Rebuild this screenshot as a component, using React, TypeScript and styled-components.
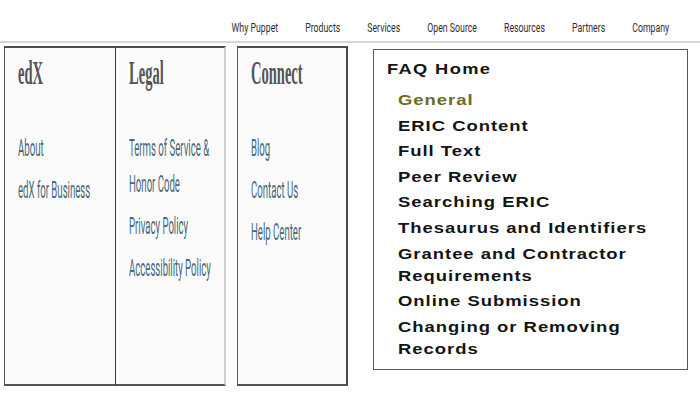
import React from 'react';
import styled, { createGlobalStyle } from 'styled-components';

const GlobalStyle = createGlobalStyle`
  html, body {
    margin: 0;
    padding: 0;
    background: #ffffff;
  }
  body {
    width: 700px;
    height: 400px;
    overflow: hidden;
    font-family: "Liberation Sans", Arial, sans-serif;
  }
`;

const navItems = ['Why Puppet', 'Products', 'Services', 'Open Source', 'Resources', 'Partners', 'Company'];

const footerColumns = [
  { title: 'edX', links: [['About'], ['edX for Business']] },
  { title: 'Legal', links: [['Terms of Service &', 'Honor Code'], ['Privacy Policy'], ['Accessibility Policy']] },
  { title: 'Connect', links: [['Blog'], ['Contact Us'], ['Help Center']] },
];

const faqItems = [
  { label: ['General'], active: true },
  { label: ['ERIC Content'] },
  { label: ['Full Text'] },
  { label: ['Peer Review'] },
  { label: ['Searching ERIC'] },
  { label: ['Thesaurus and Identifiers'] },
  { label: ['Grantee and Contractor', 'Requirements'] },
  { label: ['Online Submission'] },
  { label: ['Changing or Removing', 'Records'] },
];

const Page = styled.div`
  width: 700px;
  height: 400px;
  display: flex;
  flex-direction: column;
`;

const TopNav = styled.nav`
  height: 43px;
  box-sizing: border-box;
  border-bottom: 2px solid #d3d7db;
  display: flex;
  justify-content: flex-end;
  align-items: flex-start;
  padding: 21px 31px 0 0;
`;

// the whole menu is drawn narrow, like a condensed face
const NavGroup = styled.div`
  display: flex;
  gap: 38.6px;
  transform: scaleX(0.7);
  transform-origin: right center;
`;

const NavLink = styled.a`
  font-family: "Roboto", "Liberation Sans", sans-serif;
  font-size: 12.5px;
  line-height: 14px;
  color: #2f2f2f;
  white-space: nowrap;
`;

const Content = styled.div`
  display: flex;
  align-items: flex-start;
  padding-left: 4px;
`;

const Footer = styled.div`
  display: flex;
  margin-top: 3px;
`;

const Column = styled.div<{ $left: string; $right?: string; $gap?: number }>`
  width: 111px;
  height: 340px;
  box-sizing: border-box;
  background: #fbfbfb;
  border-top: 2px solid #4d4d4d;
  border-bottom: 2px solid #555;
  border-left: 1.5px solid ${({ $left }) => $left};
  border-right: ${({ $right }) => ($right ? `2px solid ${$right}` : 'none')};
  margin-left: ${({ $gap }) => $gap ?? 0}px;
  padding: 5px 0 0 13px;
  display: flex;
  flex-direction: column;
  align-items: flex-start;
`;

const ColTitle = styled.h3`
  margin: 0;
  font-family: "Liberation Serif", "DejaVu Serif", serif;
  font-weight: bold;
  font-size: 33px;
  line-height: 40px;
  color: #555;
  white-space: nowrap;
  transform: scaleX(0.44);
  transform-origin: left center;
`;

const LinkList = styled.ul`
  list-style: none;
  margin: 37px 0 0;
  padding: 0;
  display: flex;
  flex-direction: column;
  align-items: flex-start;
  gap: 6px;
`;

const FooterLink = styled.li`
  font-family: "Roboto", "Liberation Sans", sans-serif;
  font-size: 24px;
  line-height: 36px;
  color: #44697d;
  white-space: nowrap;
  transform: scaleX(0.4);
  transform-origin: left center;
`;

const FaqBox = styled.div`
  margin: 6px 0 0 25px;
  width: 315px;
  height: 321px;
  box-sizing: border-box;
  border: 1.5px solid #5a5a5a;
  background: #fff;
  padding: 9px 0 0 13px;
  display: flex;
  flex-direction: column;
  align-items: flex-start;
`;

const FaqTitle = styled.div`
  font-family: "Liberation Sans", Arial, sans-serif;
  font-weight: bold;
  font-size: 15px;
  line-height: 20px;
  letter-spacing: 1.1px;
  color: #151515;
  white-space: nowrap;
  transform: scaleX(1.22);
  transform-origin: left center;
`;

const FaqList = styled.ul`
  list-style: none;
  margin: 10px 0 0;
  padding: 0 0 0 11px;
  display: flex;
  flex-direction: column;
  align-items: flex-start;
  gap: 3.6px;
`;

const FaqItem = styled.li<{ $active?: boolean }>`
  font-family: "Liberation Sans", Arial, sans-serif;
  font-weight: bold;
  font-size: 15px;
  line-height: 22px;
  letter-spacing: 0.8px;
  color: ${({ $active }) => ($active ? '#6c6d22' : '#141414')};
  white-space: nowrap;
  transform: scaleX(1.23);
  transform-origin: left center;
`;

export default function App() {
  return (
    <Page>
      <GlobalStyle />
      <TopNav>
        <NavGroup>
          {navItems.map((item) => (
            <NavLink key={item}>{item}</NavLink>
          ))}
        </NavGroup>
      </TopNav>
      <Content>
        <Footer>
          {footerColumns.map((col, i) => (
            <Column
              key={col.title}
              $left={i === 1 ? '#3a3a3a' : '#5a5a5a'}
              $right={i === 1 ? '#cfcfcf' : i === 2 ? '#4a4a4a' : undefined}
              $gap={i === 2 ? 11 : 0}
            >
              <ColTitle>{col.title}</ColTitle>
              <LinkList>
                {col.links.map((lines) => (
                  <FooterLink key={lines[0]}>
                    {lines.map((line, j) => (
                      <React.Fragment key={line}>
                        {j > 0 && <br />}
                        {line}
                      </React.Fragment>
                    ))}
                  </FooterLink>
                ))}
              </LinkList>
            </Column>
          ))}
        </Footer>
        <FaqBox>
          <FaqTitle>FAQ Home</FaqTitle>
          <FaqList>
            {faqItems.map((item) => (
              <FaqItem key={item.label[0]} $active={item.active}>
                {item.label.map((line, j) => (
                  <React.Fragment key={line}>
                    {j > 0 && <br />}
                    {line}
                  </React.Fragment>
                ))}
              </FaqItem>
            ))}
          </FaqList>
        </FaqBox>
      </Content>
    </Page>
  );
}
